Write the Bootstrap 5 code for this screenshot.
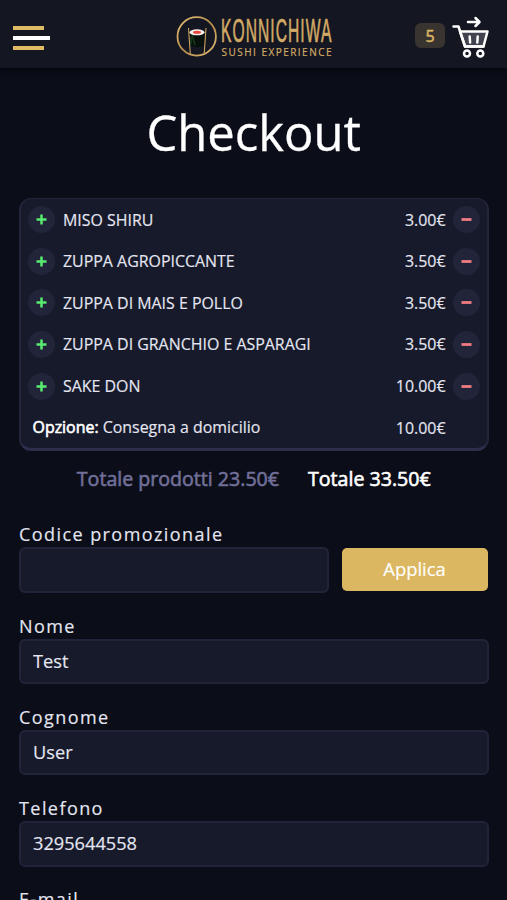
<!DOCTYPE html>
<html lang="it">
<head>
<meta charset="utf-8">
<meta name="viewport" content="width=device-width, initial-scale=1">
<title>Checkout</title>
<link href="https://cdn.jsdelivr.net/npm/bootstrap@5.3.0/dist/css/bootstrap.min.css" rel="stylesheet">
<style>
html{overflow:hidden}
body{background:#0b0d18;color:#e5e6f2;font-family:"Open Sans",sans-serif;height:900px;overflow:hidden}
.topbar{height:68px;background:#141622;box-shadow:0 2px 5px #05060c;padding:0 18px 0 13px}
.topbar>div{flex:1 1 0}
.logo{margin-left:7px;margin-top:4px}
.burger{width:37px;height:24px;background:none;margin-top:8px}
.burger i{height:4px;background:#dfbb66}
.burger i.long{background:#fff}
.short{width:31px}
.long{width:37px}
.count{width:30px;height:25px;border-radius:6px;background:#3a3430;color:#dcb662;font-size:16px;-webkit-text-stroke:.5px #dcb662;margin-top:3px}
.cart{margin-top:6px;margin-left:7px}
.page{padding:0 18.5px 0 19px}
h1{font-size:49px;line-height:68px;margin:30px 0 32px;color:#fff;font-weight:400;-webkit-text-stroke:.3px #fff}
.order{height:253px;background:#171a2a;border:2px solid #232539;border-top-width:1px;border-bottom:3px solid #2d2e4b;border-radius:12px;font-size:15.93px;-webkit-text-stroke:.15px currentColor}
.order li{height:41.6px;padding:0 6.5px 0 7px}
.order .price{margin-right:7.5px;padding-top:1.4px}
.order .dish{margin-left:8px;padding-top:1.4px}
.order .option{margin-left:4.5px;padding-top:1px}
.spacer{width:27px}
.round{width:27px;height:27px;border-radius:50%;background:#222539}
.faux{font-weight:400;-webkit-text-stroke:.6px currentColor;color:#fff}
.faux.muted{color:#706f99}
.totals{font-size:19.6px;line-height:28px;margin:14px 0 28px;gap:29px}
.field{margin-bottom:19.6px}
.field label{display:block;font-size:18px;line-height:26px;letter-spacing:1.43px;margin-bottom:0;-webkit-text-stroke:.15px currentColor}
.field .form-control{height:45.6px;margin-bottom:.4px;background:#171a2a;border:2px solid #212439;border-radius:6px;color:#e5e6f2;font-size:18.2px;padding:0 12px 1px;-webkit-text-stroke:.15px currentColor}
.field .apply{width:146px;height:43px;background:#dcb762;border:0;border-radius:5px;color:#fff;font-size:18.4px;line-height:26px;padding:0 0 1px;margin:1px 1px 0 13px;-webkit-text-stroke:.15px currentColor}
.mail{overflow:hidden;height:22px;margin:0}
</style>
</head>
<body>
<nav class="topbar d-flex align-items-center">
  <div>
    <button class="burger border-0 p-0 d-flex flex-column justify-content-between" aria-label="Menu"><i class="short"></i><i class="long"></i><i class="short"></i></button>
  </div>
  <svg class="logo" width="158" height="48" viewBox="176 12 158 48" role="img" aria-label="Konnichiwa">
    <defs><linearGradient id="gold" x1="0" y1="0" x2="1" y2="1"><stop offset="0" stop-color="#e8c477"/><stop offset=".5" stop-color="#b58b4c"/><stop offset="1" stop-color="#e3bd72"/></linearGradient></defs>
    <circle cx="196.700" cy="36.400" r="19.200" fill="none" stroke="url(#gold)" stroke-width="1.800"/>
    <path d="M190 32v13q7 4.500 14.500 0V32z" fill="#07110c"/>
    <path d="M192 35l3 10M191 37v7" stroke="#193d20" stroke-width="1.500"/>
    <ellipse cx="197" cy="32.300" rx="7.500" ry="3" fill="#f3eee9"/>
    <ellipse cx="197" cy="32.300" rx="4" ry="1.500" fill="#e7443c"/>
    <path d="M188.500 28l1.800 26M206 28l-1.800 26" stroke="#caa05b" stroke-width="1.100"/>
    <g fill="#d2aa65">
      <text transform="translate(221 42) scale(.46 1)" font-family="Liberation Sans,sans-serif" font-size="34" textLength="240" lengthAdjust="spacing" stroke="#d2aa65" stroke-width=".7">KONNICHIWA</text>
      <text x="221.500" y="56" font-size="10" font-family="Open Sans,sans-serif" textLength="110" lengthAdjust="spacing" stroke="#d2aa65" stroke-width=".2">SUSHI EXPERIENCE</text>
    </g>
  </svg>
  <div class="d-flex justify-content-end align-items-center">
    <span class="count d-flex align-items-center justify-content-center">5</span>
    <svg class="cart" width="37" height="44" viewBox="452 15 37 44" fill="none" stroke="#fff" stroke-width="2.500" stroke-linecap="round" stroke-linejoin="round">
      <path d="M460 31.500h27.500l-4 15h-18.500z" fill="#414350"/>
      <path d="M453.500 26.500h5l6.500 20h18.500M468 22h11M475.500 18l4 4-4 4"/>
      <path d="M469.700 36.500l.4 6M477.700 36.500l-.4 6"/>
      <circle cx="467" cy="53.500" r="3"/><circle cx="480.300" cy="53.500" r="3"/>
    </svg>
  </div>
</nav>
<main class="page">
  <h1 class="text-center">Checkout</h1>
  <ul class="order list-unstyled m-0">
    <li class="d-flex align-items-center"><span class="round"><svg class="d-block" width="27" height="27"><path d="M13.500 8.500v10M8.500 13.500h10" stroke="#58ec70" stroke-width="2.500"/></svg></span><span class="dish">MISO SHIRU</span><span class="price ms-auto">3.00€</span><span class="round"><svg class="d-block" width="27" height="27"><path d="M8.500 13.500h10" stroke="#f17b80" stroke-width="2.800"/></svg></span></li>
    <li class="d-flex align-items-center"><span class="round"><svg class="d-block" width="27" height="27"><path d="M13.500 8.500v10M8.500 13.500h10" stroke="#58ec70" stroke-width="2.500"/></svg></span><span class="dish">ZUPPA AGROPICCANTE</span><span class="price ms-auto">3.50€</span><span class="round"><svg class="d-block" width="27" height="27"><path d="M8.500 13.500h10" stroke="#f17b80" stroke-width="2.800"/></svg></span></li>
    <li class="d-flex align-items-center"><span class="round"><svg class="d-block" width="27" height="27"><path d="M13.500 8.500v10M8.500 13.500h10" stroke="#58ec70" stroke-width="2.500"/></svg></span><span class="dish">ZUPPA DI MAIS E POLLO</span><span class="price ms-auto">3.50€</span><span class="round"><svg class="d-block" width="27" height="27"><path d="M8.500 13.500h10" stroke="#f17b80" stroke-width="2.800"/></svg></span></li>
    <li class="d-flex align-items-center"><span class="round"><svg class="d-block" width="27" height="27"><path d="M13.500 8.500v10M8.500 13.500h10" stroke="#58ec70" stroke-width="2.500"/></svg></span><span class="dish">ZUPPA DI GRANCHIO E ASPARAGI</span><span class="price ms-auto">3.50€</span><span class="round"><svg class="d-block" width="27" height="27"><path d="M8.500 13.500h10" stroke="#f17b80" stroke-width="2.800"/></svg></span></li>
    <li class="d-flex align-items-center"><span class="round"><svg class="d-block" width="27" height="27"><path d="M13.500 8.500v10M8.500 13.500h10" stroke="#58ec70" stroke-width="2.500"/></svg></span><span class="dish">SAKE DON</span><span class="price ms-auto">10.00€</span><span class="round"><svg class="d-block" width="27" height="27"><path d="M8.500 13.500h10" stroke="#f17b80" stroke-width="2.800"/></svg></span></li>
    <li class="d-flex align-items-center"><span class="option"><b class="faux">Opzione:</b> Consegna a domicilio</span><span class="price ms-auto">10.00€</span><span class="spacer"></span></li>
  </ul>
  <div class="totals d-flex justify-content-center"><span class="faux muted">Totale prodotti 23.50€</span><span class="faux">Totale 33.50€</span></div>
  <form>
    <div class="field"><label for="promo">Codice promozionale</label><div class="d-flex align-items-start"><input id="promo" class="form-control"><button type="button" class="apply btn flex-shrink-0">Applica</button></div></div>
    <div class="field"><label for="nome">Nome</label><input id="nome" class="form-control" value="Test"></div>
    <div class="field"><label for="cognome">Cognome</label><input id="cognome" class="form-control" value="User"></div>
    <div class="field"><label for="tel">Telefono</label><input id="tel" class="form-control" value="3295644558"></div>
    <div class="field mail"><label>E-mail</label></div>
  </form>
</main>
<script src="https://cdn.jsdelivr.net/npm/bootstrap@5.3.0/dist/js/bootstrap.bundle.min.js"></script>
</body>
</html>
